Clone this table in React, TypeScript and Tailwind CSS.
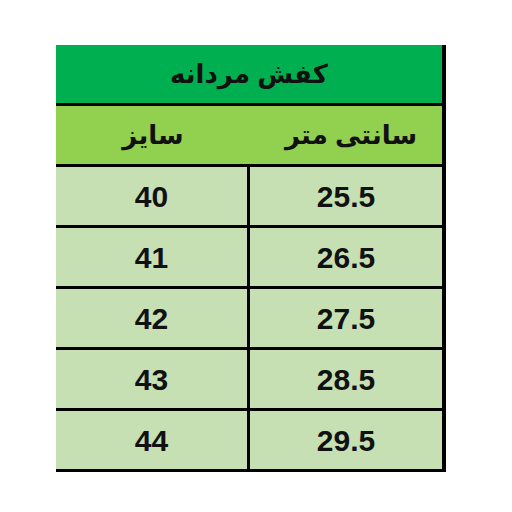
const rows = [
  { size: '40', cm: '25.5' },
  { size: '41', cm: '26.5' },
  { size: '42', cm: '27.5' },
  { size: '43', cm: '28.5' },
  { size: '44', cm: '29.5' },
];

const faFont = "font-['Liberation_Sans','DejaVu_Sans',sans-serif]";

export default function App() {
  return (
    <div className="w-[512px] h-[512px] bg-white pt-[45px] pl-[56px]">
      <div className={`w-[390px] border-r-4 border-black ${faFont} font-bold text-[#111]`}>
        {/* title */}
        <div className="h-[61px] bg-[#00b050] border-b-[3px] border-black flex items-center justify-center text-[26px]" dir="rtl">
          کفش مردانه
        </div>

        {/* column headings */}
        <div className="h-[61px] bg-[#92d050] border-b-[3px] border-black flex text-[26px]" dir="rtl">
          <div className="w-[192px] flex items-center justify-center pl-[10px]">سانتی متر</div>
          <div className="flex-1 flex items-center justify-center">سایز</div>
        </div>

        {rows.map((r) => (
          <div key={r.size} className="h-[61px] flex border-b-[3px] border-black bg-[#c6e0b4] text-[30px]">
            <div className="w-[194px] flex items-center justify-center border-r-[3px] border-black">{r.size}</div>
            <div className="flex-1 flex items-center justify-center">{r.cm}</div>
          </div>
        ))}
      </div>
    </div>
  );
}
